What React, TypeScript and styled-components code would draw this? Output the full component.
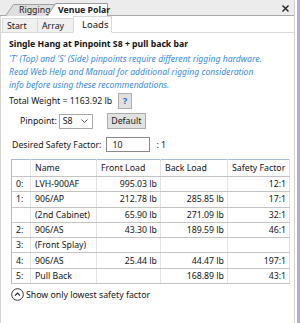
import React from "react";
import styled, { createGlobalStyle } from "styled-components";

const GlobalStyle = createGlobalStyle`
  html, body {
    margin: 0;
    padding: 0;
    background: #ffffff;
  }
  body {
    font-family: "Noto Sans", "DejaVu Sans", sans-serif;
    font-size: 8.75px;
    color: #151515;
  }
`;

const Frame = styled.div`
  width: 300px;
  height: 323px;
  display: flex;
  flex-direction: row;
  overflow: hidden;
`;

const Main = styled.div`
  width: 294px;
  display: flex;
  flex-direction: column;
  border-right: 1px solid #d2d2d2;
`;

const EdgeGap = styled.div`
  width: 2px;
  background: #ffffff;
`;

const EdgeBar = styled.div`
  width: 3px;
  background: #a9aee0;
`;

const WindowStrip = styled.div`
  height: 16px;
  display: flex;
  align-items: flex-end;
  background: #ececec;
  border-bottom: 1px solid #a8a8a8;
  padding-left: 5px;
  position: relative;
  box-sizing: border-box;
`;

const WindowTab = styled.div<{ $w: number; $h: number; $active?: boolean; $pad: number }>`
  position: relative;
  width: ${(p) => p.$w}px;
  height: ${(p) => p.$h}px;
  margin-left: ${(p) => (p.$active ? -8 : 0)}px;
  margin-bottom: -1px;
  padding-left: ${(p) => p.$pad}px;
  box-sizing: border-box;
  display: flex;
  align-items: center;
  white-space: nowrap;
  font-weight: ${(p) => (p.$active ? 700 : 400)};
  color: #202020;
  z-index: ${(p) => (p.$active ? 2 : 1)};
  & > span {
    position: relative;
  }
`;

const TabShape = styled.svg`
  position: absolute;
  left: 0;
  top: 0;
`;

const CloseIcon = styled.svg`
  position: absolute;
  right: 5px;
  top: 5px;
`;

const PageTabs = styled.div`
  height: 17px;
  display: flex;
  align-items: flex-end;
  padding-left: 2px;
  border-left: 1px solid #d4d4d4;
  margin-bottom: -1px;
`;

const PageTab = styled.div<{ $active?: boolean; $w: number }>`
  width: ${(p) => p.$w}px;
  height: ${(p) => (p.$active ? 17 : 15)}px;
  box-sizing: border-box;
  display: flex;
  align-items: center;
  padding-left: ${(p) => (p.$active ? 8 : 4)}px;
  background: ${(p) => (p.$active ? "#ffffff" : "#f0f0f0")};
  border: 1px solid #d9d9d9;
  border-bottom: ${(p) => (p.$active ? "1px solid #ffffff" : "1px solid #d9d9d9")};
  margin-left: -1px;
  position: relative;
  z-index: ${(p) => (p.$active ? 2 : 1)};
  font-size: ${(p) => (p.$active ? 9.5 : 8.75)}px;
`;

const Content = styled.div`
  flex: 1;
  border-top: 1px solid #d9d9d9;
  border-left: 1px solid #d4d4d4;
  padding: 4px 0 0 8px;
  display: flex;
  flex-direction: column;
`;

const Title = styled.div`
  font-weight: 700;
  font-size: 8.7px;
  line-height: 14px;
  color: #111;
`;

const Note = styled.div`
  margin-top: 2px;
  color: #3b8bd6;
  font-style: italic;
  font-size: 8.6px;
  line-height: 13px;
`;

const Row = styled.div<{ $indent?: number; $top: number }>`
  display: flex;
  align-items: center;
  margin-top: ${(p) => p.$top}px;
  padding-left: ${(p) => p.$indent || 0}px;
`;

const Label = styled.span<{ $gap?: number }>`
  margin-right: ${(p) => p.$gap || 0}px;
  white-space: nowrap;
`;

const HelpButton = styled.button`
  width: 14px;
  height: 16px;
  padding: 0;
  border: 1px solid #adadad;
  background: #e1e1e1;
  color: #2a72c8;
  font-family: inherit;
  font-size: 9.5px;
  font-weight: 700;
  line-height: 14px;
`;

const Select = styled.div`
  width: 34px;
  height: 15px;
  box-sizing: border-box;
  border: 1px solid #a8a8a8;
  background: #fff;
  display: flex;
  align-items: center;
  justify-content: space-between;
  padding: 0 4px 0 3px;
  margin-right: 14px;
`;

const PlainButton = styled.button`
  height: 16px;
  width: 39px;
  padding: 0;
  border: 1px solid #adadad;
  background: #e1e1e1;
  font-family: inherit;
  font-size: 8.75px;
  color: #1a1a1a;
`;

const NumberBox = styled.div`
  width: 44px;
  height: 15px;
  box-sizing: border-box;
  border: 1px solid #8a8a8a;
  background: #fff;
  padding-left: 5px;
  display: flex;
  align-items: center;
  margin-right: 6px;
`;

const Grid = styled.table`
  margin-top: 7px;
  margin-left: 2px;
  width: 278px;
  border-collapse: collapse;
  table-layout: fixed;
  border: 1px solid #a7bbd6;
`;

const HeadCell = styled.th<{ $w: number }>`
  box-sizing: border-box;
  width: ${(p) => p.$w}px;
  height: 17px;
  padding: 0 0 0 4px;
  text-align: left;
  font-weight: 400;
  border-right: 1px solid #e2e2e2;
  border-bottom: 1px solid #c4c4c4;
  white-space: nowrap;
  overflow: hidden;
`;

const Cell = styled.td<{ $right?: boolean }>`
  box-sizing: border-box;
  height: 15.3px;
  padding: 0 ${(p) => (p.$right ? 3 : 0)}px 0 ${(p) => (p.$right ? 0 : 4)}px;
  text-align: ${(p) => (p.$right ? "right" : "left")};
  border-right: 1px solid #e2e2e2;
  border-bottom: 1px solid #c4c4c4;
  white-space: nowrap;
  overflow: hidden;
  line-height: 12px;
`;

const Footer = styled.div`
  margin-top: 4px;
  margin-left: 2px;
  display: flex;
  align-items: center;
  gap: 2px;
`;

const rows = [
  ["0:", "LVH-900AF", "995.03 lb", "", "12:1"],
  ["1:", "906/AP", "212.78 lb", "285.85 lb", "17:1"],
  ["", "(2nd Cabinet)", "65.90 lb", "271.09 lb", "32:1"],
  ["2:", "906/AS", "43.30 lb", "189.59 lb", "46:1"],
  ["3:", "(Front Splay)", "", "", ""],
  ["4:", "906/AS", "25.44 lb", "44.47 lb", "197:1"],
  ["5:", "Pull Back", "", "168.89 lb", "43:1"],
];

const App: React.FC = () => {
  return (
    <Frame>
      <GlobalStyle />
      <Main>
        <WindowStrip>
          <WindowTab $w={50} $h={12} $pad={14}>
            <TabShape width="50" height="12" viewBox="0 0 50 12">
              <polygon points="0.5,12 8.5,0.5 50,0.5 50,12" fill="#dedede" />
              <polyline points="0.5,12 8.5,0.5 50,0.5" fill="none" stroke="#a0a0a0" />
            </TabShape>
            <span>Rigging</span>
          </WindowTab>
          <WindowTab $w={61} $h={13} $pad={11} $active>
            <TabShape width="61" height="13" viewBox="0 0 61 13">
              <polygon points="0.5,13 8.5,0.5 60.5,0.5 60.5,13" fill="#ffffff" />
              <polyline points="0.5,13 8.5,0.5 60.5,0.5 60.5,13" fill="none" stroke="#9a9a9a" />
            </TabShape>
            <span>Venue Polar</span>
          </WindowTab>
          <CloseIcon width="7" height="7" viewBox="0 0 7 7">
            <path d="M0.5 0.5 L6.5 6.5 M6.5 0.5 L0.5 6.5" stroke="#222" strokeWidth="1.4" />
          </CloseIcon>
        </WindowStrip>
        <PageTabs>
          <PageTab $w={36}>Start</PageTab>
          <PageTab $w={37}>Array</PageTab>
          <PageTab $w={39} $active>Loads</PageTab>
        </PageTabs>
        <Content>
          <Title>Single Hang at Pinpoint S8 + pull back bar</Title>
          <Note>
            'T' (Top) and 'S' (Side) pinpoints require different rigging hardware.
            <br />
            Read Web Help and Manual for additional rigging consideration
            <br />
            info before using these recommendations.
          </Note>
          <Row $top={1}>
            <Label $gap={6}>Total Weight = 1163.92 lb</Label>
            <HelpButton>?</HelpButton>
          </Row>
          <Row $top={4} $indent={11}>
            <Label $gap={2}>Pinpoint:</Label>
            <Select>
              <span>S8</span>
              <svg width="7" height="4" viewBox="0 0 7 4">
                <path d="M0.5 0.5 L3.5 3.5 L6.5 0.5" fill="none" stroke="#555" />
              </svg>
            </Select>
            <PlainButton>Default</PlainButton>
          </Row>
          <Row $top={8} $indent={3}>
            <Label $gap={5}>Desired Safety Factor:</Label>
            <NumberBox>10</NumberBox>
            <Label>: 1</Label>
          </Row>
          <Grid>
            <thead>
              <tr>
                <HeadCell $w={19} />
                <HeadCell $w={66}>Name</HeadCell>
                <HeadCell $w={64}>Front Load</HeadCell>
                <HeadCell $w={67}>Back Load</HeadCell>
                <HeadCell $w={62}>Safety Factor</HeadCell>
              </tr>
            </thead>
            <tbody>
              {rows.map((r, i) => (
                <tr key={i}>
                  <Cell>{r[0]}</Cell>
                  <Cell>{r[1]}</Cell>
                  <Cell $right>{r[2]}</Cell>
                  <Cell $right>{r[3]}</Cell>
                  <Cell $right>{r[4]}</Cell>
                </tr>
              ))}
            </tbody>
          </Grid>
          <Footer>
            <svg width="13" height="13" viewBox="0 0 13 13">
              <circle cx="6.5" cy="6.5" r="5.8" fill="none" stroke="#333" strokeWidth="1" />
              <path d="M4 7.6 L6.5 5.1 L9 7.6" fill="none" stroke="#222" strokeWidth="1.3" />
            </svg>
            <span>Show only lowest safety factor</span>
          </Footer>
        </Content>
      </Main>
      <EdgeGap />
      <EdgeBar />
    </Frame>
  );
};

export default App;
